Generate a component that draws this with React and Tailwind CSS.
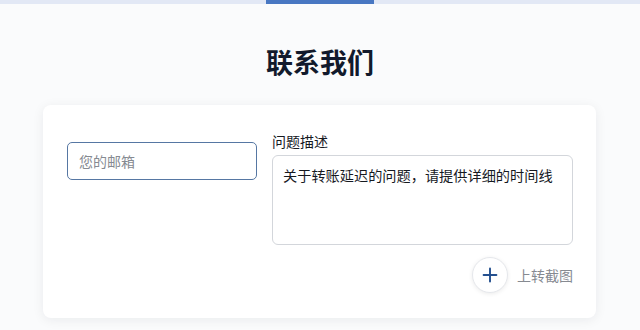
import { Plus } from 'lucide-react';

export default function App() {
  return (
    <div className="w-[640px] h-[330px] overflow-hidden bg-[#fafbfc] font-['Noto_Sans_CJK_SC',sans-serif]">
      {/* top progress bar */}
      <div className="h-[4px] bg-[#e2e8f5] flex justify-center">
        <div className="w-[108px] bg-[#4877c2]" />
      </div>

      <h1 className="mt-[42px] text-center text-[27px] leading-[32px] font-bold text-[#121a2c]">
        联系我们
      </h1>

      <div className="mt-[27px] ml-[43px] w-[553px] h-[213px] bg-white rounded-lg shadow-[0_2px_12px_rgba(15,23,42,0.07)] pt-[28px] pl-[24px] pr-[23px] flex gap-[15px] items-start">
        <input
          className="mt-[9px] w-[190px] h-[38px] px-[11px] text-[14px] rounded-[5px] border-[1.5px] border-[#5677a3] bg-white text-[#222] placeholder:text-[#868a91] outline-none"
          placeholder="您的邮箱"
        />

        <div className="flex-1 flex flex-col">
          <label className="text-[14px] leading-[16px] text-[#16191f] mb-[6px]">问题描述</label>
          <textarea
            className="h-[90px] w-full resize-none rounded-[6px] border border-[#d3d6db] px-[10px] py-[9px] text-[14.2px] leading-[20px] text-[#16191f] outline-none bg-white"
            defaultValue="关于转账延迟的问题，请提供详细的时间线"
          />
          <div className="mt-[12px] flex items-center justify-end gap-[9px]">
            <button className="w-[36px] h-[36px] rounded-full bg-white border border-[#e6e8ec] shadow-[0_1px_4px_rgba(0,0,0,0.08)] flex items-center justify-center">
              <Plus className="w-[22px] h-[22px] text-[#24508f]" strokeWidth={2.1} />
            </button>
            <span className="text-[14px] text-[#868a91]">上转截图</span>
          </div>
        </div>
      </div>
    </div>
  );
}
